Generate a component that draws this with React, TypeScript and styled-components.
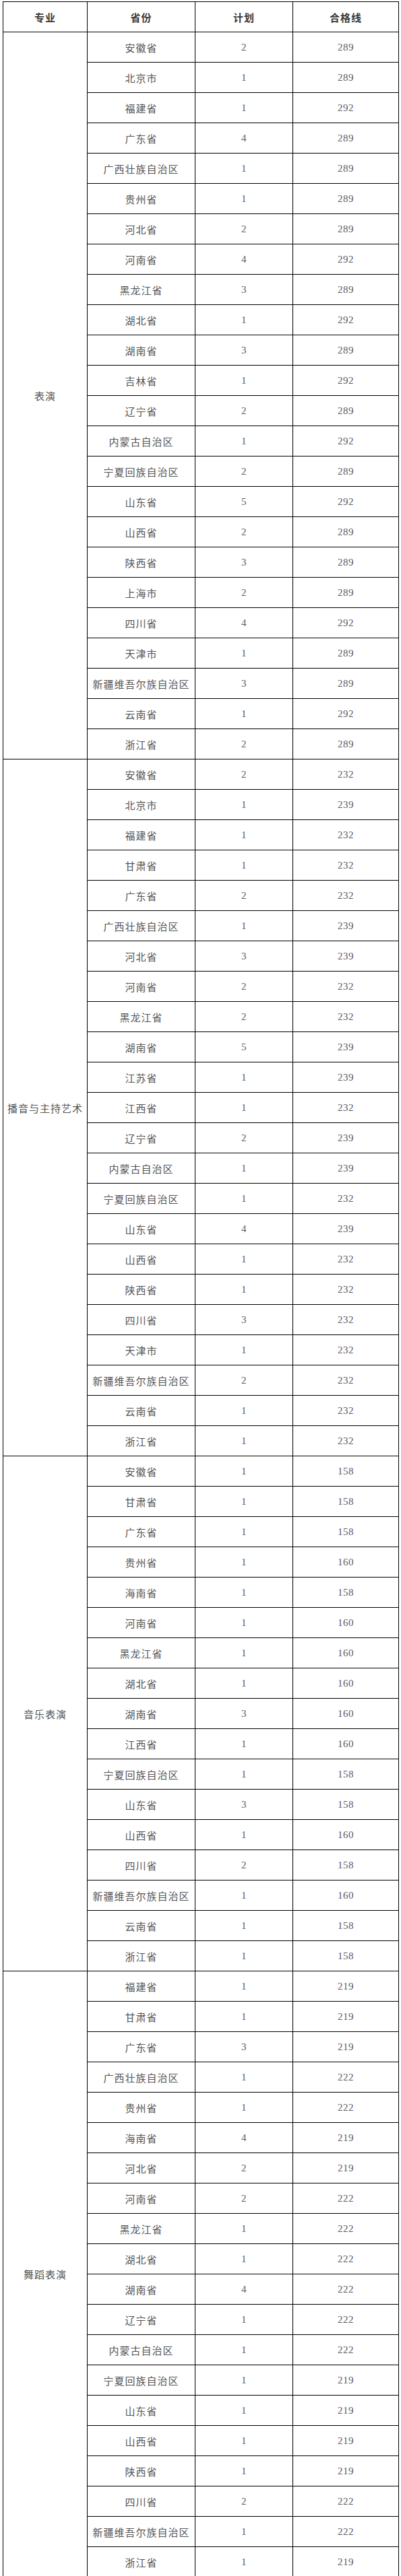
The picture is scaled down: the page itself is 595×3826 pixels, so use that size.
import React from "react";
import styled, { createGlobalStyle } from "styled-components";

const GlobalStyle = createGlobalStyle`
  html, body {
    margin: 0;
    padding: 0;
    background: #ffffff;
  }
  body {
    font-family: "Noto Sans CJK SC", "Noto Sans", sans-serif;
  }
`;

const Page = styled.div`
  padding: 2px 0 0 4px;
`;

const Table = styled.table`
  border-collapse: collapse;
  table-layout: fixed;
  width: 587px;
`;

const Col = styled.col<{ $w: number }>`
  width: ${(p) => p.$w}px;
`;

const HeadCell = styled.th`
  height: 44px;
  padding: 0;
  border: 1px solid #000;
  text-align: center;
  vertical-align: middle;
  font-family: "Noto Sans CJK SC", sans-serif;
  font-size: 15px;
  font-weight: 700;
  letter-spacing: 1px;
  color: #3a3a3a;
`;

const Cell = styled.td`
  height: 44px;
  padding: 0;
  border: 1px solid #000;
  text-align: center;
  vertical-align: middle;
  font-family: "Noto Sans CJK SC", sans-serif;
  font-size: 15px;
  font-weight: 400;
  letter-spacing: 1px;
  color: #555;
  white-space: nowrap;
`;

const NumCell = styled(Cell)`
  font-family: "Liberation Serif", "Noto Sans CJK SC", serif;
  font-size: 15px;
  letter-spacing: 0.5px;
  color: #5a5a66;
`;

type Row = [string, number, number];
type Section = { major: string; rows: Row[] };

const sections: Section[] = [
  {
    major: "表演",
    rows: [
      ["安徽省", 2, 289],
      ["北京市", 1, 289],
      ["福建省", 1, 292],
      ["广东省", 4, 289],
      ["广西壮族自治区", 1, 289],
      ["贵州省", 1, 289],
      ["河北省", 2, 289],
      ["河南省", 4, 292],
      ["黑龙江省", 3, 289],
      ["湖北省", 1, 292],
      ["湖南省", 3, 289],
      ["吉林省", 1, 292],
      ["辽宁省", 2, 289],
      ["内蒙古自治区", 1, 292],
      ["宁夏回族自治区", 2, 289],
      ["山东省", 5, 292],
      ["山西省", 2, 289],
      ["陕西省", 3, 289],
      ["上海市", 2, 289],
      ["四川省", 4, 292],
      ["天津市", 1, 289],
      ["新疆维吾尔族自治区", 3, 289],
      ["云南省", 1, 292],
      ["浙江省", 2, 289],
    ],
  },
  {
    major: "播音与主持艺术",
    rows: [
      ["安徽省", 2, 232],
      ["北京市", 1, 239],
      ["福建省", 1, 232],
      ["甘肃省", 1, 232],
      ["广东省", 2, 232],
      ["广西壮族自治区", 1, 239],
      ["河北省", 3, 239],
      ["河南省", 2, 232],
      ["黑龙江省", 2, 232],
      ["湖南省", 5, 239],
      ["江苏省", 1, 239],
      ["江西省", 1, 232],
      ["辽宁省", 2, 239],
      ["内蒙古自治区", 1, 239],
      ["宁夏回族自治区", 1, 232],
      ["山东省", 4, 239],
      ["山西省", 1, 232],
      ["陕西省", 1, 232],
      ["四川省", 3, 232],
      ["天津市", 1, 232],
      ["新疆维吾尔族自治区", 2, 232],
      ["云南省", 1, 232],
      ["浙江省", 1, 232],
    ],
  },
  {
    major: "音乐表演",
    rows: [
      ["安徽省", 1, 158],
      ["甘肃省", 1, 158],
      ["广东省", 1, 158],
      ["贵州省", 1, 160],
      ["海南省", 1, 158],
      ["河南省", 1, 160],
      ["黑龙江省", 1, 160],
      ["湖北省", 1, 160],
      ["湖南省", 3, 160],
      ["江西省", 1, 160],
      ["宁夏回族自治区", 1, 158],
      ["山东省", 3, 158],
      ["山西省", 1, 160],
      ["四川省", 2, 158],
      ["新疆维吾尔族自治区", 1, 160],
      ["云南省", 1, 158],
      ["浙江省", 1, 158],
    ],
  },
  {
    major: "舞蹈表演",
    rows: [
      ["福建省", 1, 219],
      ["甘肃省", 1, 219],
      ["广东省", 3, 219],
      ["广西壮族自治区", 1, 222],
      ["贵州省", 1, 222],
      ["海南省", 4, 219],
      ["河北省", 2, 219],
      ["河南省", 2, 222],
      ["黑龙江省", 1, 222],
      ["湖北省", 1, 222],
      ["湖南省", 4, 222],
      ["辽宁省", 1, 222],
      ["内蒙古自治区", 1, 222],
      ["宁夏回族自治区", 1, 219],
      ["山东省", 1, 219],
      ["山西省", 1, 219],
      ["陕西省", 1, 219],
      ["四川省", 2, 222],
      ["新疆维吾尔族自治区", 1, 222],
      ["浙江省", 1, 219],
    ],
  },
];

export default function App() {
  return (
    <>
      <GlobalStyle />
      <Page>
        <Table>
          <colgroup>
            <Col $w={125} />
            <Col $w={160} />
            <Col $w={145} />
            <Col $w={157} />
          </colgroup>
          <thead>
            <tr>
              <HeadCell>专业</HeadCell>
              <HeadCell>省份</HeadCell>
              <HeadCell>计划</HeadCell>
              <HeadCell>合格线</HeadCell>
            </tr>
          </thead>
          <tbody>
            {sections.map((s) =>
              s.rows.map((r, i) => (
                <tr key={s.major + r[0]}>
                  {i === 0 && <Cell rowSpan={s.rows.length}>{s.major}</Cell>}
                  <Cell>{r[0]}</Cell>
                  <NumCell>{r[1]}</NumCell>
                  <NumCell>{r[2]}</NumCell>
                </tr>
              ))
            )}
          </tbody>
        </Table>
      </Page>
    </>
  );
}
